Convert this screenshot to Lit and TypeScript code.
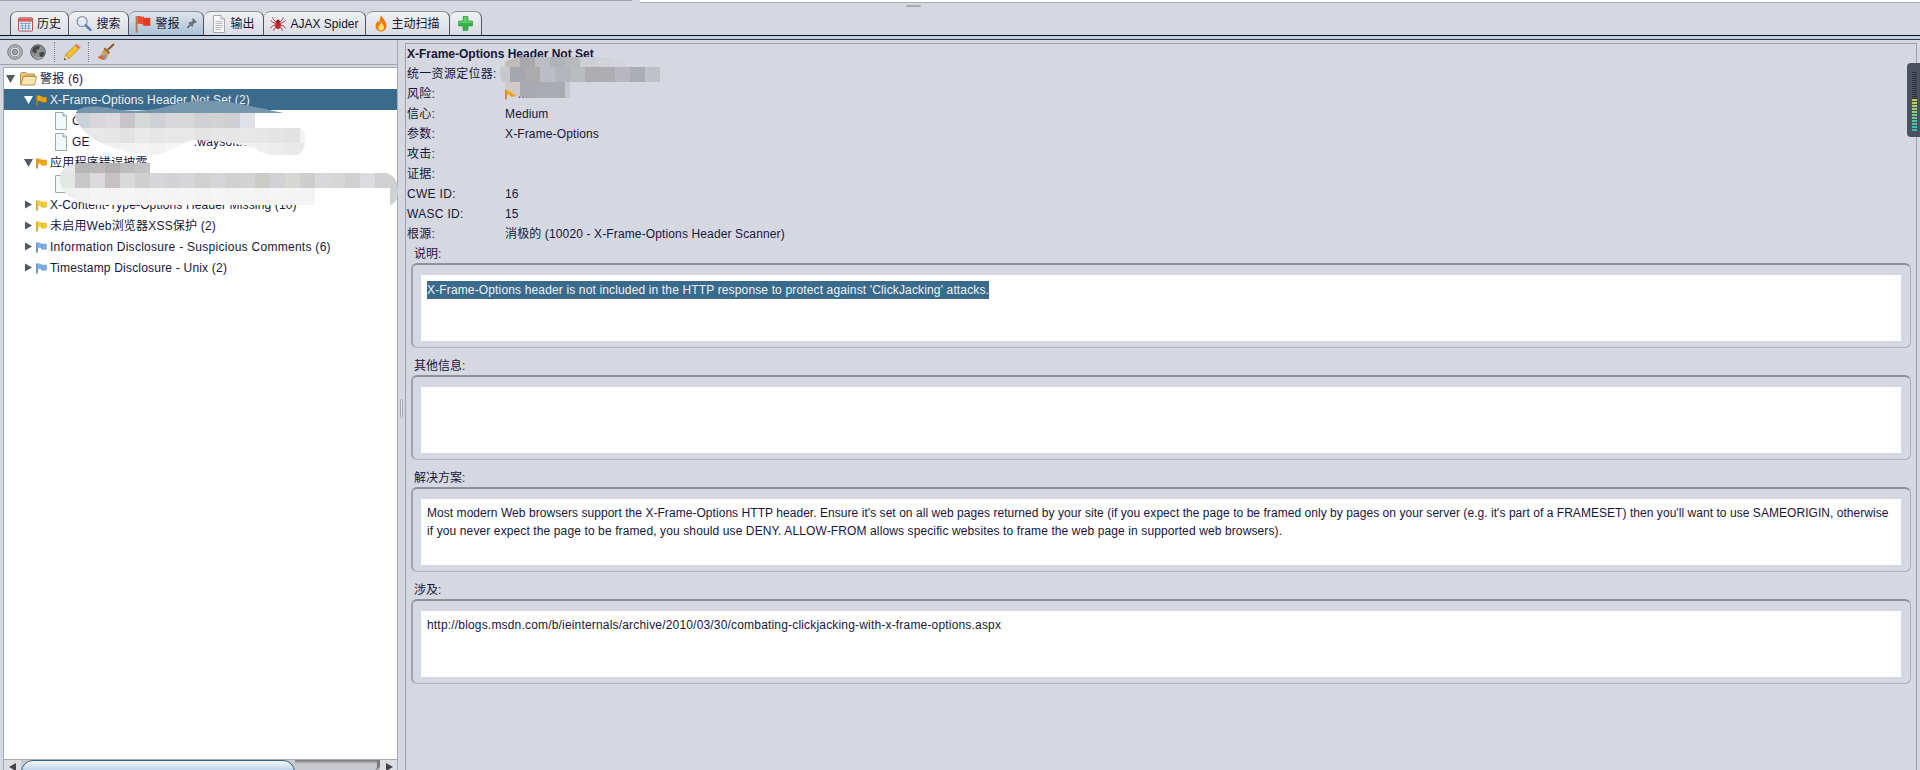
import { LitElement, html, css, svg } from "lit";
import { customElement } from "lit/decorators.js";

const flag = (c: string, d: string) => html`<svg class="flag" width="11" height="12" viewBox="0 0 11 12">
  <path d="M1 1.5V11.5" stroke="${d}" stroke-width="1.6" fill="none"/>
  <path d="M1.5 2C3 .8 4.5 2.6 6 2.3V7C4.5 7.4 3 6 1.5 7Z" fill="${c}"/>
  <path d="M6 3.2C7.5 3.6 9 2.7 10.4 3.2V8.2C9 7.8 7.4 8.8 5.2 8L6 7Z" fill="${c}" stroke="${d}" stroke-width=".5"/>
</svg>`;
const orange = () => flag("#f7a90a", "#c67a06");
const yellow = () => flag("#f5cf30", "#c79a10");
const blue = () => flag("#7fb0e6", "#4a7fb8");

const docIcon = () => html`<svg width="14" height="18" viewBox="0 0 14 18">
  <path d="M1.5 .5H9L12.5 4V17.5H1.5Z" fill="#f2f8f8" stroke="#9aa8aa"/>
  <path d="M9 .5V4H12.5" fill="#dce6e6" stroke="#9aa8aa"/>
</svg>`;
const docLines = () => html`<svg width="14" height="18" viewBox="0 0 14 18">
  <path d="M1.5 .5H9L12.5 4V17.5H1.5Z" fill="#f8f8f8" stroke="#a5a8ac"/>
  <path d="M9 .5V4H12.5" fill="#dfe2e4" stroke="#a5a8ac"/>
  <path d="M3.5 6.5H10.5M3.5 8.5H10.5M3.5 10.5H10.5M3.5 12.5H10.5M3.5 14.5H9" stroke="#b5b8bc"/>
</svg>`;

const calendar = () => html`<svg width="15" height="16" viewBox="0 0 16 16">
  <rect x=".5" y="1.5" width="15" height="14" rx="1" fill="#fdf6f2" stroke="#b9413a"/>
  <rect x="1" y="2" width="14" height="3.5" fill="#e2564c"/>
  <path d="M3 5.8V.5M13 5.8V.5" stroke="#8f8f8f" stroke-width="1.4"/>
  <path d="M2 7.5H14M2 10H14M2 12.5H14M4.5 6V15M8 6V15M11.5 6V15" stroke="#6fa0d2" stroke-width="1"/>
</svg>`;
const search = () => html`<svg width="16" height="17" viewBox="0 0 17 17">
  <circle cx="6.5" cy="6.5" r="5.3" fill="#dcebf7" stroke="#8c97a3" stroke-width="1.4"/>
  <path d="M4 4.6A3.4 3.4 0 0 1 7.6 3.4" stroke="#fff" stroke-width="1.3" fill="none"/>
  <path d="M10.5 10.5L15.3 15.3" stroke="#4f80b8" stroke-width="2.6" stroke-linecap="round"/>
</svg>`;
const redFlag = () => html`<svg width="16" height="18" viewBox="0 0 16 18">
  <path d="M1.6 1V17.5" stroke="#a77b52" stroke-width="1.8"/>
  <path d="M2.4 1.2C4.5 .2 7 2.2 9 1.6V9C7 9.8 4.5 8 2.4 9Z" fill="#ef4b2e"/>
  <path d="M9 3.2C11 3.6 13 2.8 15 3.2V10.6C13 10.2 10.6 11.2 8 10.2L9 9Z" fill="#e43a22" stroke="#c22c18" stroke-width=".5"/>
</svg>`;
const pin = () => html`<svg width="10" height="11" viewBox="0 0 10 11">
  <path d="M6 .5L9.5 4L8.4 4.6L7.6 4.4L5.8 6.4L5.8 8L5 8.6L1.8 5.2L2.4 4.6H4L6 2.6L5.6 1.6Z" fill="#6c7078" stroke="#4c5058" stroke-width=".5"/>
  <path d="M3 7L.5 10" stroke="#4c5058" stroke-width="1.2"/>
</svg>`;
const spider = () => html`<svg width="16" height="16" viewBox="0 0 18 16">
  <g stroke="#b3242a" stroke-width="1" fill="none">
    <path d="M7 6L4 3L3 .5M7 7.5L3 6L.5 4M7 9L3 10L.5 13M7.5 11L5 13L4 15.5"/>
    <path d="M11 6L14 3L15 .5M11 7.5L15 6L17.5 4M11 9L15 10L17.5 13M10.5 11L13 13L14 15.5"/>
  </g>
  <ellipse cx="9" cy="9.5" rx="3.2" ry="4.2" fill="#c9282e"/>
  <circle cx="9" cy="4.8" r="2" fill="#8f1a20"/>
</svg>`;
const flame = () => html`<svg width="12" height="17" viewBox="0 0 12 17">
  <path d="M6.5 .5C7.5 3.5 11.5 6 11.5 10.5C11.5 14 9 16.5 6 16.5C3 16.5 .6 14.2 .6 11C.6 8.5 2 7.2 3 5.5C3.4 6.6 3.8 7 4.4 7.4C4.2 5 5 2.5 6.5 .5Z" fill="#ee7a12"/>
  <path d="M6.5 7C7 9 9 10.5 9 12.6C9 14.4 7.6 15.6 6 15.6C4.4 15.6 3.2 14.4 3.2 12.8C3.2 11 5.5 9.5 6.5 7Z" fill="#fde27a"/>
</svg>`;
const plus = () => html`<svg width="15" height="15" viewBox="0 0 15 15">
  <path d="M5 .5H10V5H14.5V10H10V14.5H5V10H.5V5H5Z" fill="#35b045" stroke="#2a9338" stroke-width=".6"/>
  <path d="M5.6 1.2H9.4V5.6H14V7H1V5.6H5.6Z" fill="#5cd06a"/>
</svg>`;
const target = () => html`<svg width="16" height="16" viewBox="0 0 16 16">
  <circle cx="8" cy="8" r="7.3" fill="#b5b6ba" stroke="#77797f"/>
  <circle cx="8" cy="8" r="5" fill="#e1e2e4" stroke="#85878c"/>
  <circle cx="8" cy="8" r="2.7" fill="#a3a4a8" stroke="#77797f"/>
</svg>`;
const globe = () => html`<svg width="16" height="16" viewBox="0 0 16 16">
  <circle cx="8" cy="8" r="7.3" fill="#8f9094" stroke="#5b5c60"/>
  <path d="M3 4C5 2 8 1.5 10 2.5L9 5L6.5 6L6.8 8.5L4.5 9.5L2 7ZM9 9L13 7.5L14.5 9.5L12 13.5L10 12.5Z" fill="#454549"/>
  <path d="M4 12.5A6 6 0 0 0 12 13" stroke="#c4c5c8" fill="none"/>
</svg>`;
const pencil = () => html`<svg width="18" height="18" viewBox="0 0 18 18">
  <path d="M13.5 1L17 4.5L6 15.5L2.5 12Z" fill="#f6c425" stroke="#a9791a" stroke-width=".7"/>
  <path d="M13.5 1L17 4.5L15.5 6L12 2.5Z" fill="#e8786a"/>
  <path d="M2.5 12L6 15.5L1 17Z" fill="#f5dfb6" stroke="#a9791a" stroke-width=".5"/>
  <path d="M1 17L1.6 15L3 16.4Z" fill="#333"/>
</svg>`;
const broom = () => html`<svg width="18" height="18" viewBox="0 0 18 18">
  <path d="M17 1L10.5 7" stroke="#8b5a2b" stroke-width="2.2"/>
  <path d="M8 4.5L13 9.5L9 16.5C6 17 2 16 .6 13.5C3 13.5 4 12 4.5 10Z" fill="#d9a35c"/>
  <path d="M1 14L5 12L8 16.6C5.5 17 2.5 16 1 14Z" fill="#e85f3c"/>
  <path d="M5.5 13L9 11L8.8 16.5Z" fill="#5f9bd8"/>
  <path d="M8 4.5L13 9.5L11.5 11L6.5 6Z" fill="#8f6a3a"/>
</svg>`;
const folder = () => html`<svg class="folder" width="17" height="15" viewBox="0 0 17 15">
  <path d="M.5 13.5V2.5L1.5 1.5H6L7.5 3H14.5V5H3.5L.5 13.5Z" fill="#e9c77b" stroke="#b99550"/>
  <path d="M.8 14L3.5 5.5H16.5L14.5 14Z" fill="#f8e6b0" stroke="#b99550"/>
</svg>`;

interface Cell { x: number; w: number; c: string }
const cells = (start: number, w: number, cs: string[]): Cell[] => cs.map((c, i) => ({ x: start + i * w, w, c }));
const band = (y: number, h: number, list: Cell[]) => list.map((k) => svg`<rect x="${k.x}" y="${y}" width="${k.w + 0.5}" height="${h}" fill="${k.c}"/>`);

@customElement("smudge-layer")
class SmudgeLayer extends LitElement {
  static styles = css`
    :host { position: absolute; left: 0; top: 0; width: 1920px; height: 770px; pointer-events: none; display: block; }
    svg { display: block; }
  `;
  render() {
    return html`<svg width="1920" height="770" viewBox="0 0 1920 770">
      <defs>
        <clipPath id="b1"><path d="M75 116C76 106 90 105 110 108C130 112 150 112 172 105C195 99 225 100 245 105C260 108 275 111 283 113H255V128H300C308 130 307 150 298 155C285 157 262 156 255 148C235 142 210 140 192 140C175 146 165 155 150 155C115 152 82 140 75 116Z"/></clipPath>
        <clipPath id="b2"><path d="M60 178C60 168 70 163 85 163H150V173H385C394 174 398 182 398 190C398 198 396 204 390 205H110C85 206 60 200 60 178Z"/></clipPath>
        <clipPath id="b3"><path d="M500 72C500 62 510 57 525 57H600C625 59 640 65 660 67V82H570V98H530C510 98 500 85 500 72Z"/></clipPath>
      </defs>
      <g clip-path="url(#b1)">
        <rect x="75" y="100" width="210" height="13" fill="#7596ad"/>
        ${band(113, 15, cells(75, 15, ["#ccd1d7","#d9d6da","#dcdadd","#c9c4c8","#d6d9d8","#cfd0d1","#d8d8da","#d7d7d8","#d0d0d2","#d2d2d3","#cfcfd1","#dfe1e6"]))}
        ${band(128, 15, cells(75, 15, ["#e6e7e8","#e8e8e9","#e5e5e6","#e2e2e3","#e8e9e8","#e6e6e6","#e8e8e9","#e8e8e9","#e4e4e5","#e6e6e7","#e6e6e7","#e8e8e9","#e6e6e7","#e4e4e5","#e2e2e3","#f2f3f6"]))}
        ${band(143, 12, cells(90, 15, ["#f2f2f2","#f0f0f0","#f2f2f2","#f3f3f3","#f1f1f1","#f4f4f4","#f3f3f3","#f2f2f2","#f3f3f3","#f1f1f1","#f0f0f0","#eeeeee","#ececec","#e9e9ea","#e9e9ea"]))}
      </g>
      <g clip-path="url(#b2)">
        ${band(163, 10, cells(60, 15, ["#e6e7e6","#b7b6b6","#bab8b9","#b3b0b1","#bbbcbb","#c3c3c3"]))}
        ${band(173, 15, cells(60, 15, ["#e4e6e4","#c9c8c8","#dbd9db","#c6c2c4","#d8d9d8","#cfcfd0","#d6d6d8","#d3d3d5","#d6d6d8","#d0d0d1","#d5d5d7","#d0d0d1","#d3d3d4","#cbcbc8","#d2d2d6","#d6d6d2","#cdcdcd","#d8d8da","#d6d6d6","#d0d0d0","#dcdce0","#d0d0d4","#d0d0d4"]))}
        ${band(188, 17, cells(60, 15, ["#eef0ee","#f1f1f1","#f4f4f4","#f3f3f3","#f5f5f5","#f3f3f3","#f5f5f5","#f4f4f4","#f5f5f5","#f3f3f3","#f5f5f5","#f3f3f3","#f5f5f5","#f3f3f3","#f5f5f5","#f4f4f4","#f4f4f4","#ffffff","#ffffff","#ffffff","#ffffff","#ffffff","#cfd0d4"]))}
      </g>
      <g clip-path="url(#b3)">
        ${band(57, 10, cells(505, 15, ["#c0bdb9","#a8a8ac","#bcbdc5","#b1b2ba","#b8b9bc","#cdcfd6","#d0d2da","#d2d4dc"]))}
        ${band(67, 15, cells(500, 10, ["#c8c8cc"]).concat(cells(510, 15, ["#a6a6ae","#acacac","#bcbdc6","#b5b6bd","#bbbcc0","#acacb1","#acacb1","#b7b7bd","#acacb3","#c0c1c7"])))}
        ${band(82, 16, cells(505, 15, ["#cdcac8","#a9a9b1","#aaaab1","#aaaab1","#c6c8cf"]))}
      </g>
    </svg>`;
  }
}

const tabs = [
  { icon: calendar, label: "历史", w: 59 },
  { icon: search, label: "搜索", w: 60 },
  { icon: redFlag, label: "警报", w: 75, active: true },
  { icon: docLines, label: "输出", w: 60 },
  { icon: spider, label: "AJAX Spider", w: 102 },
  { icon: flame, label: "主动扫描", w: 84 },
  { icon: plus, label: "", w: 32 },
];

@customElement("app-root")
export class AppRoot extends LitElement {
  static styles = css`
    :host {
      display: block; position: relative; width: 1920px; height: 770px; overflow: hidden;
      background: #d5d8e1; color: #16163a;
      font-family: "Liberation Sans", "Noto Sans CJK SC", sans-serif; font-size: 12px; line-height: 18px;
    }
    .strip { height: 11px; display: flex; align-items: flex-start; }
    .strip .rule { width: 632px; height: 1px; background: #a0a3ab; }
    .strip .paper { margin-left: 8px; flex: 1; height: 2px; background: #fff; border-bottom: 1px solid #a7aab2; }
    .grip { position: absolute; left: 906px; top: 5px; width: 15px; height: 2px; background: #a9acb5; border-radius: 1px 1px 0 0; }

    .tabs { height: 24px; padding-left: 10px; display: flex; border-bottom: 1px solid #0c0f26; }
    .tab {
      box-sizing: border-box; height: 24px; display: flex; align-items: center; gap: 4px; justify-content: center;
      border: 1px solid #50545e; border-bottom: 0; border-left-width: 0; border-top-color: #8c9098;
      border-radius: 7px 7px 0 0; background: linear-gradient(#f0f1f4, #d9dce3); color: #14142e; font-size: 12px;
    }
    .tab:first-child { border-left-width: 1px; }
    .tab.active { background: linear-gradient(#dfe4ea, #a9c1d6); }
    .tab svg { flex: none; display: block; }
    .tab .pin { margin-left: 3px; }
    .band { height: 3px; background: #c4d1df; border-bottom: 1px solid #2b3348; }

    .main { height: 730px; display: flex; }
    .pane { width: 397px; flex: none; display: flex; flex-direction: column; }
    .toolbar {
      height: 24px; display: flex; align-items: center; padding-left: 3px;
      border-bottom: 1px solid #a0a3ab; width: 397px; flex: none;
    }
    .toolbar .tool { width: 23px; display: flex; justify-content: center; }
    .toolbar .sep { width: 0; height: 20px; border-left: 1px dotted #80838c; margin: 0 5px; }
    .tree {
      margin: 2px 0 0 3px; flex: 1; background: #fff; border: 1px solid #a6a9b2; border-right: 0; border-bottom: 0;
      display: flex; flex-direction: column; min-height: 0;
    }
    .rows { flex: 1; }
    .row { height: 21px; display: flex; align-items: center; white-space: nowrap; letter-spacing: .2px; color: #16163a; }
    .row.sel { background: #3a6a8c; color: #eef2f6; }
    .caret { width: 10px; flex: none; display: flex; justify-content: center; }
    .l0 { padding-left: 1px; }
    .l0 .caret { margin-right: 5px; }
    .l0 svg.folder { margin-right: 3px; flex: none; }
    .l1 { padding-left: 19px; }
    .l1 .caret { margin-right: 3px; }
    .l1 .flag { margin-right: 3px; flex: none; }
    .l2 { padding-left: 50px; }
    .l2 svg { margin-right: 4px; }
    .ls-tight { letter-spacing: .11px; }
    .ls-mid { letter-spacing: .14px; }
    .ls-wide { letter-spacing: .28px; }
    .gap { display: inline-block; }
    .scroll { height: 11px; flex: none; display: flex; border-top: 1px solid #a6a9b2; background: #c8c9ce; overflow: hidden; box-sizing: border-box; }
    .sbtn { width: 17px; flex: none; background: #dcdde2; display: flex; align-items: flex-start; justify-content: center; padding-top: 3px; }
    .thumb { width: 274px; flex: none; height: 24px; border: 1px solid #33608c; border-radius: 12px; background: linear-gradient(#f4f8fb, #b4cee4 50%); box-sizing: border-box; }
    .track { flex: 1; background: linear-gradient(#777, #c8c9ce 4px); border-right: 3px solid #77787c; border-radius: 0 0 5px 0; }

    .divider { width: 8px; flex: none; position: relative; background: #d5d8e1; border-left: 1px solid #a6a9b2; box-sizing: border-box; }
    .handle { position: absolute; left: 2px; top: 359px; width: 3px; height: 19px; border: 1px solid #a0a3ab; border-radius: 2px; background: #eceef2; box-sizing: border-box; }

    .detail {
      flex: 1; margin: 3px 3px 0 0; border: 1px solid #9da1ab; border-bottom: 0; display: flex; flex-direction: column;
      padding: 0 5px 0 0; min-width: 0;
    }
    .kv { display: grid; grid-template-columns: 98px 1fr; height: 20px; align-items: center; padding-left: 1px; white-space: nowrap; letter-spacing: .13px; }
    .kv > span:first-child { letter-spacing: .3px; }
    .title { height: 20px; padding-left: 1px; font-weight: bold; display: flex; align-items: center; }
    .val { display: flex; align-items: center; gap: 2px; }
    .sec-label { height: 18px; line-height: 18px; padding-left: 8px; margin-top: 1px; }
    .sec + .sec .sec-label { margin-top: 9px; }
    .box {
      margin-left: 5px; height: 85px; box-sizing: border-box; padding: 10px 9px 6px 8px;
      border: 1px solid #aeb1b9; border-top: 2px solid #8f929a; border-left: 2px solid #9fa2aa; border-radius: 6px;
    }
    .inner { height: 66px; background: #fff; padding: 5px 6px; box-sizing: border-box; line-height: 18px; white-space: nowrap; }
    .inner.first { padding-top: 6px; }
    .picked { background: #3a6a8c; color: #f0f3f6; display: inline-block; letter-spacing: .145px; }
    .sol-a { letter-spacing: .05px; }
    .sol-b { letter-spacing: .115px; }
    .link { letter-spacing: .18px; }

    .meter { position: absolute; left: 1907px; top: 63px; }
  `;

  render() {
    return html`
      <div class="strip"><div class="rule"></div><div class="paper"></div></div>
      <div class="grip"></div>
      <div class="tabs">
        ${tabs.map((t) => html`<div class="tab ${t.active ? "active" : ""}" style="width:${t.w}px">
          ${t.icon()}${t.label ? html`<span>${t.label}</span>` : ""}${t.active ? html`<span class="pin">${pin()}</span>` : ""}
        </div>`)}
      </div>
      <div class="band"></div>
      <div class="main">
        <div class="pane">
          <div class="toolbar">
            <span class="tool">${target()}</span><span class="tool">${globe()}</span>
            <span class="sep"></span>
            <span class="tool">${pencil()}</span>
            <span class="sep"></span>
            <span class="tool">${broom()}</span>
          </div>
          <div class="tree">
            <div class="rows">
              ${this.row(0, "down", folder(), "警报 (6)")}
              ${this.row(1, "down", orange(), "X-Frame-Options Header Not Set (2)", true, "ls-tight")}
              <div class="row l2">${docIcon()}<span>G</span></div>
              <div class="row l2">${docIcon()}<span>GE</span><span class="gap" style="width:104px"></span><span>.waysoft.cn</span></div>
              ${this.row(1, "down", orange(), "应用程序错误披露")}
              <div class="row l2">${docIcon()}</div>
              ${this.row(1, "right", yellow(), "X-Content-Type-Options Header Missing (10)", false, "ls-mid")}
              ${this.row(1, "right", yellow(), "未启用Web浏览器XSS保护 (2)")}
              ${this.row(1, "right", blue(), "Information Disclosure - Suspicious Comments (6)", false, "ls-wide")}
              ${this.row(1, "right", blue(), "Timestamp Disclosure - Unix (2)")}
            </div>
            <div class="scroll">
              <div class="sbtn"><svg width="8" height="8" viewBox="0 0 8 8"><path d="M7 0V8L0 4Z" fill="#444"/></svg></div>
              <div class="thumb"></div>
              <div class="track"></div>
              <div class="sbtn"><svg width="8" height="8" viewBox="0 0 8 8"><path d="M1 0V8L8 4Z" fill="#444"/></svg></div>
            </div>
          </div>
        </div>
        <div class="divider"><div class="handle"></div></div>
        <div class="detail">
          <div class="title">X-Frame-Options Header Not Set</div>
          <div class="kv"><span>统一资源定位器:</span><span></span></div>
          <div class="kv"><span>风险:</span><span class="val">${orange()}<span>Medium</span></span></div>
          <div class="kv"><span>信心:</span><span>Medium</span></div>
          <div class="kv"><span>参数:</span><span>X-Frame-Options</span></div>
          <div class="kv"><span>攻击:</span><span></span></div>
          <div class="kv"><span>证据:</span><span></span></div>
          <div class="kv"><span>CWE ID:</span><span>16</span></div>
          <div class="kv"><span>WASC ID:</span><span>15</span></div>
          <div class="kv"><span>根源:</span><span>消极的 (10020 - X-Frame-Options Header Scanner)</span></div>
          <div class="sec">
            <div class="sec-label">说明:</div>
            <div class="box"><div class="inner first"><span class="picked">X-Frame-Options header is not included in the HTTP response to protect against 'ClickJacking' attacks.</span></div></div>
          </div>
          <div class="sec">
            <div class="sec-label">其他信息:</div>
            <div class="box"><div class="inner"></div></div>
          </div>
          <div class="sec">
            <div class="sec-label">解决方案:</div>
            <div class="box"><div class="inner"><span class="sol-a">Most modern Web browsers support the X-Frame-Options HTTP header. Ensure it's set on all web pages returned by your site (if you expect the page to be framed only by pages on your server (e.g. it's part of a FRAMESET) then you'll want to use SAMEORIGIN, otherwise</span><br><span class="sol-b">if you never expect the page to be framed, you should use DENY. ALLOW-FROM allows specific websites to frame the web page in supported web browsers).</span></div></div>
          </div>
          <div class="sec">
            <div class="sec-label">涉及:</div>
            <div class="box"><div class="inner link">http://blogs.msdn.com/b/ieinternals/archive/2010/03/30/combating-clickjacking-with-x-frame-options.aspx</div></div>
          </div>
        </div>
      </div>
      <smudge-layer></smudge-layer>
      <svg class="meter" width="13" height="74" viewBox="0 0 13 74">
        <rect x="0" y="0" width="16" height="74" rx="4" fill="#4b5062"/>
        ${Array.from({ length: 15 }, (_, i) => svg`<rect x="5" y="${9 + i * 2}" width="5" height="1" fill="#2e3140"/>`)}
        ${["#c8cf3e","#bcd24a","#a9d45a","#95d468","#82d374","#70d080","#5ecd8c","#4ec996","#42c49e","#3cbfa6","#36bbae"].map((c, i) => svg`<rect x="5" y="${36 + i * 3}" width="5" height="2" fill="${c}"/>`)}
      </svg>
    `;
  }

  private row(level: number, dir: "down" | "right", icon: unknown, label: string, sel = false, ls = "") {
    const fill = sel ? "#fff" : "#555a60";
    const arrow = dir === "down"
      ? svg`<path d="M0 1H9L4.5 9Z" fill="${fill}"/>`
      : svg`<path d="M1 .5L8 4.5L1 8.5Z" fill="${fill}"/>`;
    return html`<div class="row l${level} ${sel ? "sel" : ""} ${ls}">
      <span class="caret"><svg width="9" height="9" viewBox="0 0 9 9">${arrow}</svg></span>
      ${icon}<span>${label}</span>
    </div>`;
  }
}
void SmudgeLayer;
